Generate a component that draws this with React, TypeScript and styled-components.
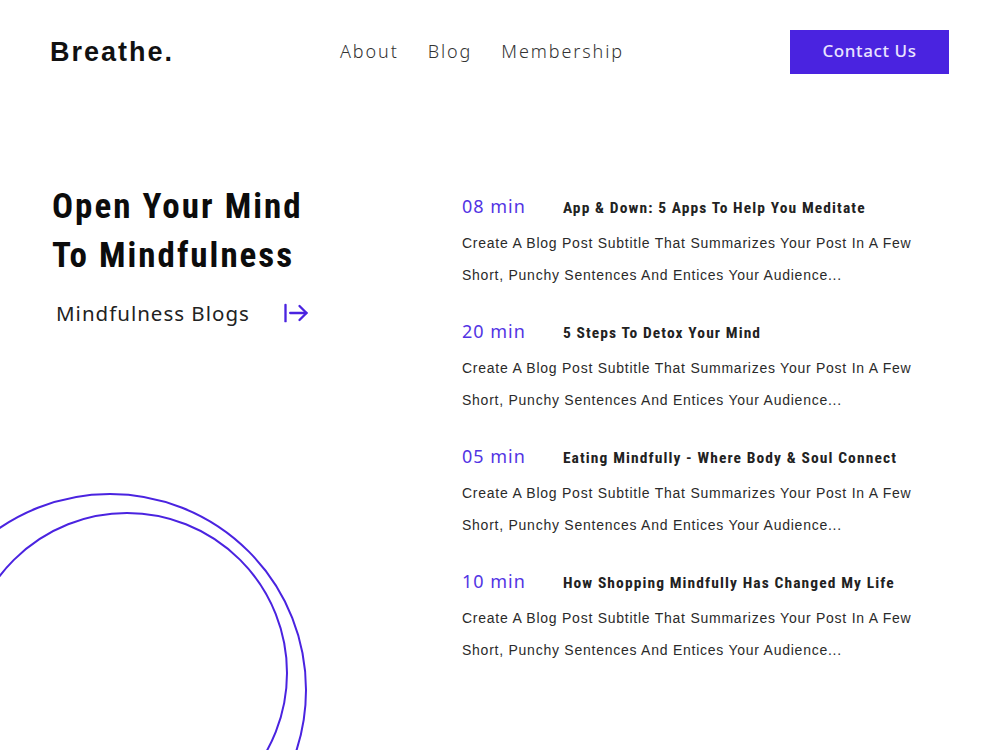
import styled, { createGlobalStyle } from 'styled-components'
import { ArrowRightFromLine } from 'lucide-react'

const accent = '#4a23e0'
const condensed = "'Roboto Condensed', Roboto, 'Liberation Sans', sans-serif"

const GlobalStyle = createGlobalStyle`
  html, body {
    margin: 0;
    padding: 0;
    background: #ffffff;
  }
  * {
    box-sizing: border-box;
  }
`

const Page = styled.div`
  position: relative;
  width: 1000px;
  height: 750px;
  overflow: hidden;
  background: #ffffff;
  font-family: 'Liberation Sans', Arial, sans-serif;
`

const Header = styled.header`
  display: grid;
  grid-template-columns: 290px 1fr auto;
  align-items: center;
  height: 44px;
  margin: 30px 51px 0 50px;
`

const Logo = styled.div`
  font-family: 'Liberation Sans', Arial, sans-serif;
  font-weight: 700;
  font-size: 27px;
  letter-spacing: 2px;
  color: #111;
`

const Nav = styled.nav`
  display: flex;
  gap: 29px;
  align-items: center;
  padding-bottom: 2px;
`

const NavLink = styled.a`
  font-family: 'Noto Sans', sans-serif;
  font-weight: 300;
  font-size: 18px;
  letter-spacing: 1.9px;
  color: #333;
  text-decoration: none;
`

const ContactButton = styled.button`
  width: 159px;
  height: 44px;
  padding: 0 0 3px;
  border: none;
  background: ${accent};
  color: #e9e4ff;
  font-family: 'Noto Sans', sans-serif;
  font-size: 17px;
  font-weight: 500;
  letter-spacing: 0.6px;
  cursor: pointer;
`

const Main = styled.main`
  display: grid;
  grid-template-columns: 410px 1fr;
  margin: 106px 0 0 52px;
`

const Intro = styled.section`
  display: flex;
  flex-direction: column;
  padding-top: 2px;
`

const Headline = styled.h1`
  margin: 0;
  font-family: ${condensed};
  font-weight: 700;
  font-size: 35px;
  line-height: 49px;
  letter-spacing: 2px;
  color: #0c0c0c;
`

const BlogsLink = styled.a`
  display: flex;
  align-items: center;
  gap: 32px;
  margin: 19px 0 0 4px;
  font-family: 'Noto Sans', sans-serif;
  font-size: 20.5px;
  letter-spacing: 1px;
  color: #222;
  text-decoration: none;

  svg {
    color: ${accent};
  }
`

const PostList = styled.section`
  display: flex;
  flex-direction: column;
  gap: 28px;
  padding-top: 14px;
`

const Post = styled.article`
  display: flex;
  flex-direction: column;
`

const PostHead = styled.div`
  display: flex;
  align-items: baseline;
  gap: 37px;
  height: 32px;
`

const Duration = styled.span`
  font-family: 'Noto Sans', sans-serif;
  font-size: 18px;
  letter-spacing: 1px;
  color: #5234e4;
`

const PostTitle = styled.h3`
  margin: 0;
  font-family: ${condensed};
  font-weight: 700;
  font-size: 15.5px;
  letter-spacing: 1.1px;
  color: #222;
`

const Summary = styled.p`
  margin: 1px 0 0;
  font-family: 'Liberation Sans', Arial, sans-serif;
  font-size: 14px;
  line-height: 32px;
  letter-spacing: 0.75px;
  color: #2a2a2a;
`

const Rings = styled.svg`
  position: absolute;
  left: 0;
  top: 480px;
  pointer-events: none;
`

const posts = [
  { minutes: '08', title: 'App & Down: 5 Apps To Help You Meditate' },
  { minutes: '20', title: '5 Steps To Detox Your Mind' },
  { minutes: '05', title: 'Eating Mindfully - Where Body & Soul Connect' },
  { minutes: '10', title: 'How Shopping Mindfully Has Changed My Life' },
]

export default function App() {
  return (
    <Page>
      <GlobalStyle />
      <Header>
        <Logo>Breathe.</Logo>
        <Nav>
          <NavLink href="#">About</NavLink>
          <NavLink href="#">Blog</NavLink>
          <NavLink href="#">Membership</NavLink>
        </Nav>
        <ContactButton>Contact Us</ContactButton>
      </Header>

      <Main>
        <Intro>
          <Headline>
            Open Your Mind
            <br />
            To Mindfulness
          </Headline>
          <BlogsLink href="#">
            Mindfulness Blogs
            <ArrowRightFromLine size={28} strokeWidth={2} />
          </BlogsLink>
        </Intro>

        <PostList>
          {posts.map((post) => (
            <Post key={post.title}>
              <PostHead>
                <Duration>{post.minutes} min</Duration>
                <PostTitle>{post.title}</PostTitle>
              </PostHead>
              <Summary>
                Create A Blog Post Subtitle That Summarizes Your Post In A Few
                <br />
                Short, Punchy Sentences And Entices Your Audience...
              </Summary>
            </Post>
          ))}
        </PostList>
      </Main>

      <Rings width="320" height="270" viewBox="0 0 320 270">
        <circle cx="110" cy="210" r="196" fill="none" stroke={accent} strokeWidth="2" />
        <circle cx="127" cy="193" r="160" fill="none" stroke={accent} strokeWidth="2" />
      </Rings>
    </Page>
  )
}
